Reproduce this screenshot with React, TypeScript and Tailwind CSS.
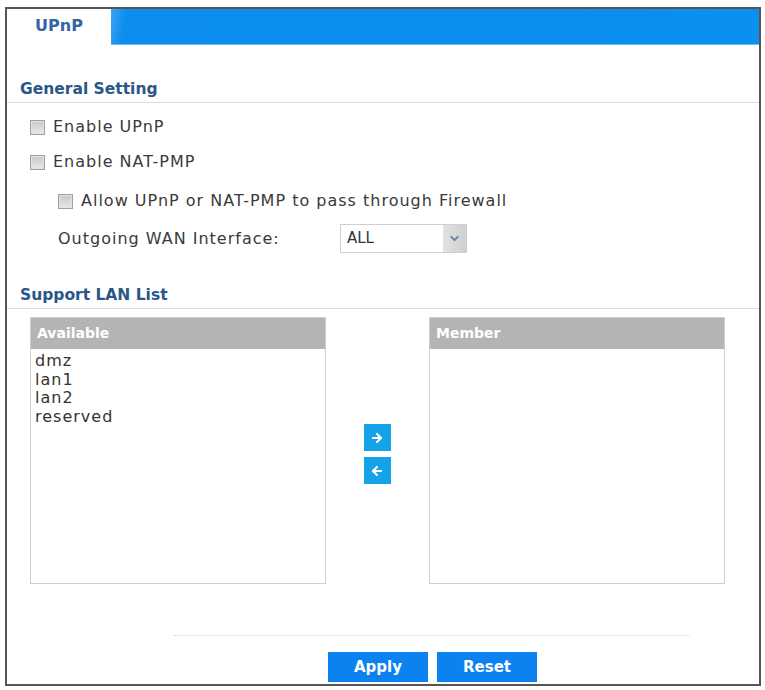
import { ArrowLeft, ArrowRight, ChevronDown } from "lucide-react"

const font = { fontFamily: '"DejaVu Sans", "Liberation Sans", sans-serif' }

function CheckRow({ label, indent = false }: { label: string; indent?: boolean }) {
  return (
    <div className={`flex items-center h-[24px] ${indent ? "pl-[51px]" : "pl-[23px]"}`}>
      <span className="w-[15px] h-[15px] border border-[#a0a0a0] bg-[linear-gradient(180deg,#c8c8c8,#e8e8e8)] shadow-[inset_0_0_0_1px_#e2e2e2]" />
      <span className="ml-[8px] text-[16px] tracking-[1px] text-[#3a3a3a]">{label}</span>
    </div>
  )
}

function ListBox({ title, items }: { title: string; items: string[] }) {
  return (
    <div className="w-[296px] h-[267px] border border-[#cfcfcf] bg-white flex flex-col">
      <div className="h-[31px] bg-[#b4b4b4] flex items-center pl-[6px] text-[14px] font-bold text-white">
        {title}
      </div>
      <div className="pt-[3px] pl-[4px]">
        {items.map((item) => (
          <div key={item} className="h-[18.7px] leading-[18.7px] text-[16px] tracking-[1px] text-[#333]">
            {item}
          </div>
        ))}
      </div>
    </div>
  )
}

export default function App() {
  return (
    <div className="w-[765px] h-[690px] bg-white overflow-hidden pt-[7px]" style={font}>
      <div className="ml-[5px] w-[756px] h-[679px] border-2 border-[#555] flex flex-col">
        {/* tab bar */}
        <div className="h-[36px] flex">
          <div className="w-[104px] flex items-center justify-center pb-[3px] text-[16px] font-bold text-[#3564a6]">
            UPnP
          </div>
          <div className="flex-1 bg-[linear-gradient(100deg,#3aa4f2_0%,#0b8eee_2.5%,#0a90ee_100%)] border-b border-[#6cc0f7]" />
        </div>

        {/* General Setting */}
        <div className="mt-[34px] pl-[13px] pb-[3px] border-b border-[#dedede] text-[15.5px] leading-[20px] font-bold text-[#2b5688]">
          General Setting
        </div>
        <div className="mt-[12px]">
          <CheckRow label="Enable UPnP" />
        </div>
        <div className="mt-[11px]">
          <CheckRow label="Enable NAT-PMP" />
        </div>
        <div className="mt-[15px]">
          <CheckRow label="Allow UPnP or NAT-PMP to pass through Firewall" indent />
        </div>
        <div className="mt-[11px] flex items-center h-[29px] pl-[51px]">
          <span className="w-[282px] text-[16px] tracking-[1px] text-[#3a3a3a]">Outgoing WAN Interface:</span>
          <div className="w-[127px] h-[29px] border border-[#cfcfcf] flex">
            <span className="flex-1 pl-[6px] flex items-center text-[15px] text-[#333]">ALL</span>
            <span className="w-[23px] bg-[linear-gradient(90deg,#e2e2e2,#cfcfcf)] flex items-center justify-center">
              <ChevronDown size={13} strokeWidth={3.5} className="text-[#5f82aa]" />
            </span>
          </div>
        </div>

        {/* Support LAN List */}
        <div className="mt-[32px] pl-[13px] pb-[3px] border-b border-[#dedede] text-[15.5px] leading-[20px] font-bold text-[#2b5688]">
          Support LAN List
        </div>
        <div className="mt-[8px] pl-[23px] flex">
          <ListBox title="Available" items={["dmz", "lan1", "lan2", "reserved"]} />
          <div className="w-[103px] flex flex-col items-center pt-[107px] gap-[6px] pr-[1px]">
            <button className="w-[27px] h-[27px] bg-[#16a2e8] flex items-center justify-center">
              <ArrowRight size={14} strokeWidth={3.5} className="text-white" />
            </button>
            <button className="w-[27px] h-[27px] bg-[#16a2e8] flex items-center justify-center">
              <ArrowLeft size={14} strokeWidth={3.5} className="text-white" />
            </button>
          </div>
          <ListBox title="Member" items={[]} />
        </div>

        {/* footer */}
        <div className="mt-[51px] ml-[167px] w-[516px] border-t border-dotted border-[#d6d6d6]" />
        <div className="mt-[16px] ml-[321px] flex gap-[9px]">
          <button className="w-[100px] h-[30px] bg-[#0b82f0] text-white text-[15px] font-bold">Apply</button>
          <button className="w-[100px] h-[30px] bg-[#0b82f0] text-white text-[15px] font-bold">Reset</button>
        </div>
      </div>
    </div>
  )
}
